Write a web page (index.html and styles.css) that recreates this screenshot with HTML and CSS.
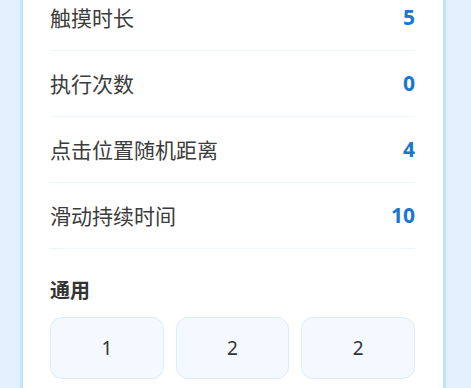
FILE: index.html
```html
<!DOCTYPE html>
<html lang="zh-CN">
<head>
    <meta charset="UTF-8">
    <meta name="viewport" content="width=device-width, initial-scale=1.0">
    <title>设置</title>
    <link rel="stylesheet" href="styles.css">
</head>
<body>
    <div class="card">
        <div class="list">
            <div class="row"><span class="label">触摸时长</span><span class="value">5</span></div>
            <div class="row"><span class="label">执行次数</span><span class="value">0</span></div>
            <div class="row"><span class="label">点击位置随机距离</span><span class="value">4</span></div>
            <div class="row"><span class="label">滑动持续时间</span><span class="value">10</span></div>
        </div>
        <div class="section">
            <h2>通用</h2>
            <div class="options">
                <button>1</button>
                <button>2</button>
                <button>2</button>
            </div>
        </div>
    </div>
</body>
</html>
```

FILE: styles.css
```css
html, body {
    margin: 0;
    padding: 0;
}
body {
    font-family: "Noto Sans", "Noto Sans CJK SC", sans-serif;
    background-color: #e3f0fd;
    color: #333;
    padding-left: 20px;
    height: 388px;
    overflow: hidden;
}
.card {
    width: 365px;
    margin-top: -15px;
    background-color: #fff;
    border-left: 3px solid #bfe4fb;
    border-right: 3px solid #bfe4fb;
    padding: 0 28px 40px 27px;
}
.row {
    display: flex;
    justify-content: space-between;
    align-items: center;
    height: 63px;
    padding-bottom: 2px;
    border-bottom: 1px solid #eef5fb;
}
.label {
    font-size: 21px;
    color: #3c3c3c;
}
.value {
    font-size: 21px;
    font-weight: bold;
    color: #1976d2;
}
.section {
    padding-top: 28px;
}
.section h2 {
    margin: 0 0 12px 0;
    font-size: 20px;
    line-height: 28px;
    font-weight: bold;
    color: #333;
}
.options {
    display: grid;
    grid-template-columns: repeat(3, 1fr);
    gap: 12px;
}
.options button {
    height: 62px;
    font-family: inherit;
    font-size: 19px;
    color: #333;
    background-color: #f3f9fe;
    border: 1px solid #dcedf8;
    border-radius: 12px;
}
```
